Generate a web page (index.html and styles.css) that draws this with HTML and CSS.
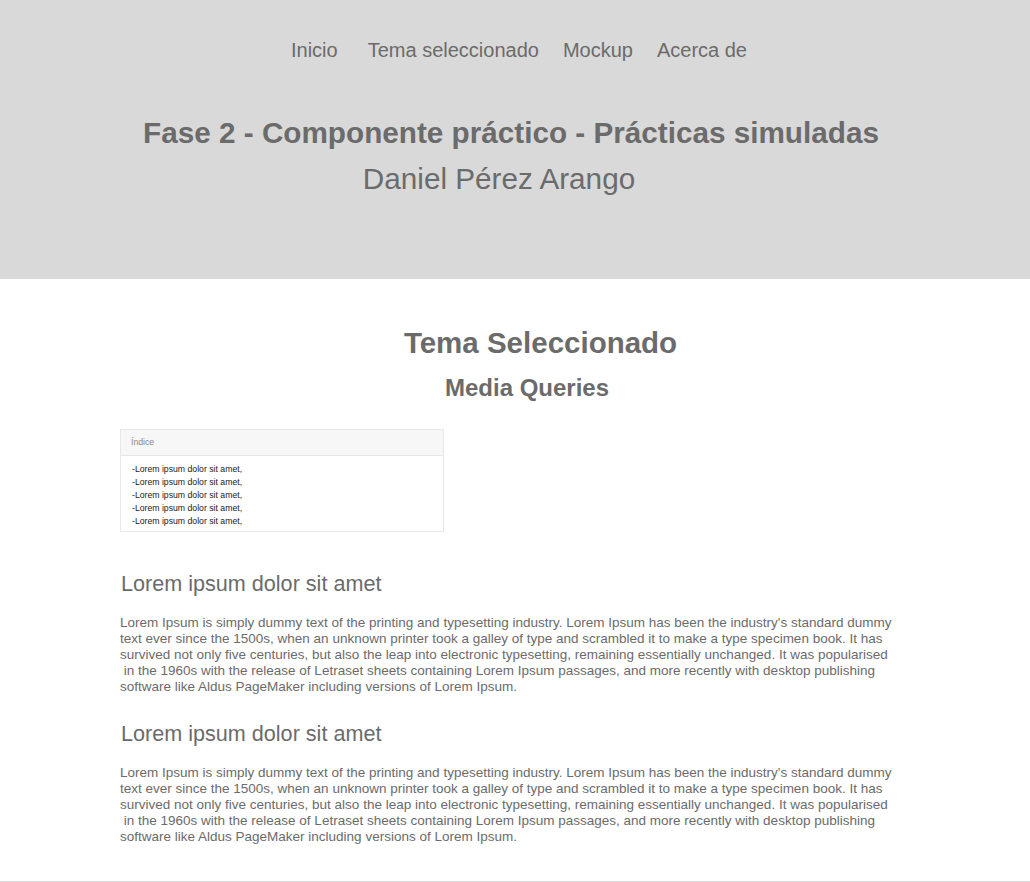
FILE: index.html
```html
<!DOCTYPE html>
<html lang="es">
<head>
<meta charset="utf-8">
<title>Fase 2</title>
<link rel="stylesheet" href="styles.css">
</head>
<body>
<header class="top">
  <nav class="nav">
    <a class="nav-link nav-first" href="#">Inicio</a>
    <a class="nav-link" href="#">Tema seleccionado</a>
    <a class="nav-link" href="#">Mockup</a>
    <a class="nav-link" href="#">Acerca de</a>
  </nav>
  <h1 class="title">Fase 2 - Componente práctico - Prácticas simuladas</h1>
  <p class="author">Daniel Pérez Arango</p>
</header>
<main class="main">
  <h2 class="sec-title">Tema Seleccionado</h2>
  <h3 class="sec-sub">Media Queries</h3>
  <div class="card">
    <div class="card-head">Índice</div>
    <div class="card-body">
      -Lorem ipsum dolor sit amet,<br>
      -Lorem ipsum dolor sit amet,<br>
      -Lorem ipsum dolor sit amet,<br>
      -Lorem ipsum dolor sit amet,<br>
      -Lorem ipsum dolor sit amet,
    </div>
  </div>
  <section class="block">
    <h4 class="block-title">Lorem ipsum dolor sit amet</h4>
    <p class="block-text">Lorem Ipsum is simply dummy text of the printing and typesetting industry. Lorem Ipsum has been the industry's standard dummy<br>text ever since the 1500s, when an unknown printer took a galley of type and scrambled it to make a type specimen book. It has<br>survived not only five centuries, but also the leap into electronic typesetting, remaining essentially unchanged. It was popularised<br>&nbsp;in the 1960s with the release of Letraset sheets containing Lorem Ipsum passages, and more recently with desktop publishing<br>software like Aldus PageMaker including versions of Lorem Ipsum.</p>
  </section>
  <section class="block">
    <h4 class="block-title">Lorem ipsum dolor sit amet</h4>
    <p class="block-text">Lorem Ipsum is simply dummy text of the printing and typesetting industry. Lorem Ipsum has been the industry's standard dummy<br>text ever since the 1500s, when an unknown printer took a galley of type and scrambled it to make a type specimen book. It has<br>survived not only five centuries, but also the leap into electronic typesetting, remaining essentially unchanged. It was popularised<br>&nbsp;in the 1960s with the release of Letraset sheets containing Lorem Ipsum passages, and more recently with desktop publishing<br>software like Aldus PageMaker including versions of Lorem Ipsum.</p>
  </section>
</main>
<footer class="foot"></footer>
</body>
</html>
```
FILE: styles.css
```css
* { box-sizing: border-box; }
html, body { margin: 0; padding: 0; }
body {
  font-family: "Liberation Sans", Arial, sans-serif;
  color: #6b6b6b;
  background: #fff;
}
.top {
  background: #d9d9d9;
  height: 279px;
  padding-top: 37px;
  display: flex;
  flex-direction: column;
  align-items: center;
}
.nav {
  display: flex;
  gap: 24px;
  margin-left: 8px;
}
.nav-link {
  color: #6b6b6b;
  text-decoration: none;
  font-size: 20px;
  line-height: 26px;
}
.nav-first { margin-right: 6px; }
.title {
  margin: 53px 8px 0 0;
  font-size: 29.7px;
  line-height: 34px;
  font-weight: bold;
}
.author {
  margin: 12px 32px 0 0;
  font-size: 29.7px;
  line-height: 34px;
}
.main {
  width: 790px;
  padding: 47px 0 36px;
  margin-left: 120px;
}
.sec-title {
  margin: 0;
  text-align: center;
  font-size: 29.5px;
  line-height: 34px;
  font-weight: bold;
  padding-left: 51px;
}
.sec-sub {
  margin: 14px 0 0;
  text-align: center;
  font-size: 24px;
  line-height: 28px;
  font-weight: bold;
  padding-left: 24px;
}
.card {
  width: 324px;
  margin-top: 27px;
  border: 1px solid #e8e8e8;
}
.card-head {
  background: #f7f7f7;
  border-bottom: 1px solid #e6e6e6;
  font-size: 8.7px;
  line-height: 25px;
  padding: 0 10px;
  color: #888;
}
.card-body {
  font-size: 8.7px;
  line-height: 13px;
  padding: 7px 11px 3px;
  color: #222;
}
.block { margin-top: 39px; }
.block + .block { margin-top: 26px; }
.block-title {
  margin: 0 0 0 1px;
  font-size: 21.6px;
  line-height: 26px;
  font-weight: normal;
}
.block-text {
  margin: 18px 0 0;
  font-size: 13.5px;
  line-height: 16px;
}
.foot {
  background: #d9d9d9;
  height: 40px;
}
```
